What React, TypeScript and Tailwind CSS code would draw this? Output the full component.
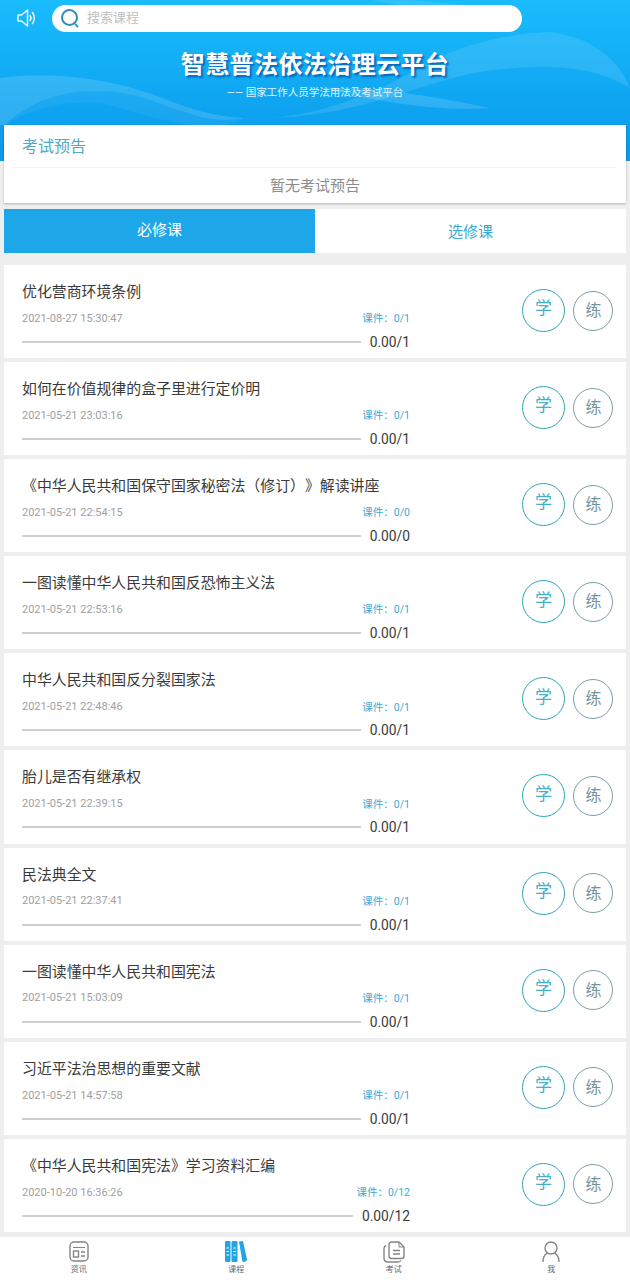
const COURSES = [
  { title: "优化营商环境条例", date: "2021-08-27 15:30:47", total: 1 },
  { title: "如何在价值规律的盒子里进行定价明", date: "2021-05-21 23:03:16", total: 1 },
  { title: "《中华人民共和国保守国家秘密法（修订）》解读讲座", date: "2021-05-21 22:54:15", total: 0 },
  { title: "一图读懂中华人民共和国反恐怖主义法", date: "2021-05-21 22:53:16", total: 1 },
  { title: "中华人民共和国反分裂国家法", date: "2021-05-21 22:48:46", total: 1 },
  { title: "胎儿是否有继承权", date: "2021-05-21 22:39:15", total: 1 },
  { title: "民法典全文", date: "2021-05-21 22:37:41", total: 1 },
  { title: "一图读懂中华人民共和国宪法", date: "2021-05-21 15:03:09", total: 1 },
  { title: "习近平法治思想的重要文献", date: "2021-05-21 14:57:58", total: 1 },
  { title: "《中华人民共和国宪法》学习资料汇编", date: "2020-10-20 16:36:26", total: 12 },
];

const CJK = "font-['Roboto','Noto_Sans_CJK_SC',sans-serif]";

function CourseRow({ title, date, total }: { title: string; date: string; total: number }) {
  return (
    <div className="h-[93.1px] bg-white flex items-start pl-[18px] pr-[13px]">
      <div className="w-[388px] pt-[16px]">
        <div className="h-[22px] leading-[22px] text-[14.9px] text-[#3a3a3a] whitespace-nowrap [text-spacing-trim:space-all]">{title}</div>
        <div className="mt-[7px] h-[18px] flex justify-between items-center text-[11px]">
          <span className="text-[#a0a0a0]">{date}</span>
          <span className="text-[10.5px] text-[#3aa9d6]">课件：0/{total}</span>
        </div>
        <div className="mt-[4px] flex items-center gap-[9px]">
          <div className="flex-1 h-[2px] bg-[#cfcfcf]" />
          <span className="text-[13.8px] leading-[20px] text-[#3a3a3a]">0.00/{total}</span>
        </div>
      </div>
      <div className="ml-auto mt-[24px] flex items-center gap-[8px]">
        <div className="size-[43px] rounded-full border border-[#2fa3b8] flex items-center justify-center pb-[3px] text-[17px] text-[#45afc8]">
          学
        </div>
        <div className="size-[40px] rounded-full border border-[#7d9ca4] flex items-center justify-center pl-[1px] pt-[1px] text-[16px] text-[#75939b]">
          练
        </div>
      </div>
    </div>
  );
}

function NavItem({ label, children }: { label: string; children: React.ReactNode }) {
  return (
    <div className="flex-1 flex flex-col items-center pt-[4px]">
      <div className="h-[22px] flex items-center">{children}</div>
      <span className="text-[8px] leading-[12px] mt-[1px] text-[#666]">{label}</span>
    </div>
  );
}

export default function App() {
  return (
    <div className={`w-[630px] h-[1280px] overflow-hidden bg-[#eeeeee] ${CJK}`}>
      <header className="relative h-[161px] bg-gradient-to-b from-[#19bcfd] to-[#0a98ea] overflow-hidden">
        {/* background swooshes */}
        <svg className="absolute inset-0" width="630" height="161" viewBox="0 0 630 161" fill="#ffffff">
          <path d="M0 78C40 72 85 76 125 86C170 98 195 116 245 118C210 125 185 112 150 100C100 84 45 88 5 125H0Z" fillOpacity="0.14" />
          <path d="M245 118C300 122 370 98 430 62C470 42 510 34 548 32C590 36 620 60 630 88C600 70 560 60 480 72C420 82 350 122 245 118Z" fillOpacity="0.11" />
          <path d="M320 88C380 86 440 98 490 108C440 112 380 102 320 88Z" fillOpacity="0.14" />
          <path d="M370 0C400 6 430 10 470 10H520L410 0Z" fillOpacity="0.1" />
          <path d="M5 125C45 88 100 84 150 100C185 112 210 125 245 118C215 135 165 122 120 108C80 96 40 105 5 125Z" fillOpacity="0.05" />
        </svg>
        <div className="relative flex items-center h-[36px] pl-[17px]">
          <svg width="19" height="20" viewBox="0 0 19 20" fill="none" stroke="#e6f7ff" strokeWidth="1.5" strokeLinejoin="round" strokeLinecap="round">
            <path d="M1 7H4.500L10.500 2V18L4.500 13H1Z" />
            <path d="M13 7.500C14.200 9 14.200 11 13 12.500" />
            <path d="M15.500 4.500C17.800 8 17.800 12 15.500 15.500" />
          </svg>
          <div className="ml-[16px] w-[470px] h-[27px] rounded-full bg-white flex items-center pl-[8px] gap-[7px]">
            <svg width="20" height="21" viewBox="0 0 20 21" fill="none" strokeLinecap="round">
              <circle cx="9.500" cy="9.500" r="7.500" stroke="#2f8fb8" strokeWidth="2" />
              <path d="M15.500 16.500L17.500 18.500" stroke="#2a9cc0" strokeWidth="2" />
            </svg>
            <span className="text-[13px] text-[#c0c0c0]">搜索课程</span>
          </div>
        </div>
        <h1 className="relative mt-[13px] text-center text-[24px] leading-[32px] font-bold tracking-[0.4px] text-white [text-shadow:2px_2px_2px_#0a62b4]">
          智慧普法依法治理云平台
        </h1>
        <p className="relative mt-[5px] text-center text-[10.500px] leading-[14px] text-[#dff4ff]">—— 国家工作人员学法用法及考试平台</p>
      </header>

      <section className="relative -mt-[36px] mx-[4px] h-[78px] bg-white shadow-[0_1px_2px_rgba(0,0,0,0.25)]">
        <div className="mx-[9px] h-[43px] border-b border-[#f2f2f2] pl-[9px] leading-[43px] text-[16px] text-[#50a8c8]">考试预告</div>
        <div className="h-[35px] leading-[36px] text-center text-[15px] text-[#8c8c8c]">暂无考试预告</div>
      </section>

      <div className="mt-[6px] mx-[4px] h-[44px] flex text-[15px]">
        <div className="flex-1 bg-[#1ea7e8] text-white text-center leading-[42px]">必修课</div>
        <div className="flex-1 bg-white text-[#3aa9d6] text-center leading-[46px]">选修课</div>
      </div>

      <main className="mt-[12px] mx-[4px] flex flex-col gap-[4px]">
        {COURSES.map((course) => (
          <CourseRow key={course.title} {...course} />
        ))}
      </main>

      <nav className="mt-[5px] h-[43px] bg-white flex">
        <NavItem label="资讯">
          <svg width="20" height="21" viewBox="0 0 20 21" fill="none" stroke="#858585" strokeWidth="1.400">
            <rect x="1" y="1" width="18" height="19" rx="4" />
            <path d="M4 6.500H16" strokeWidth="1" />
            <rect x="4.500" y="10" width="5" height="6" />
            <path d="M12 11H16M12 15H16" />
          </svg>
        </NavItem>
        <NavItem label="课程">
          <svg width="22" height="21" viewBox="0 0 22 21" fill="#21a5e6">
            <rect x="0" y="0" width="5.500" height="21" rx="1" />
            <rect x="6.500" y="0" width="6" height="21" rx="1" />
            <path d="M14 0.500L18 0L22 18.500C22 19.500 21.500 20 20.500 20.500L18.500 21C18 21 17.500 20.500 17.300 20Z" />
            <path d="M1.500 7H4M1.500 10.500H4M1.500 14H4M8.300 7H10.800M8.300 10.500H10.800M8.300 14H10.800" stroke="#fff" strokeWidth="1" />
          </svg>
        </NavItem>
        <NavItem label="考试">
          <svg width="22" height="22" viewBox="0 0 22 22" fill="none" stroke="#858585" strokeWidth="1.400" strokeLinejoin="round">
            <path d="M8.500 1H16L21 6V15C21 16.500 20 17.500 18.500 17.500H8.500C7 17.500 6 16.500 6 15V3.500C6 2 7 1 8.500 1Z" />
            <path d="M16 1V6H21" strokeWidth="1" />
            <path d="M10 9.500H17M10 13H17" />
            <path d="M3 4.500C1.800 5 1 6 1 7.500V17C1 19.500 2.500 21 5 21H15C16.500 21 17.500 20.300 18 19.500" />
          </svg>
        </NavItem>
        <NavItem label="我">
          <svg width="18" height="21" viewBox="0 0 18 21" fill="none" stroke="#858585" strokeWidth="1.400" strokeLinecap="round">
            <circle cx="9" cy="7" r="6" />
            <path d="M1 20.500C1 17 2.200 14.500 4.500 12.500M17 20.500C17 17 15.800 14.500 13.500 12.500" />
          </svg>
        </NavItem>
      </nav>
    </div>
  );
}
